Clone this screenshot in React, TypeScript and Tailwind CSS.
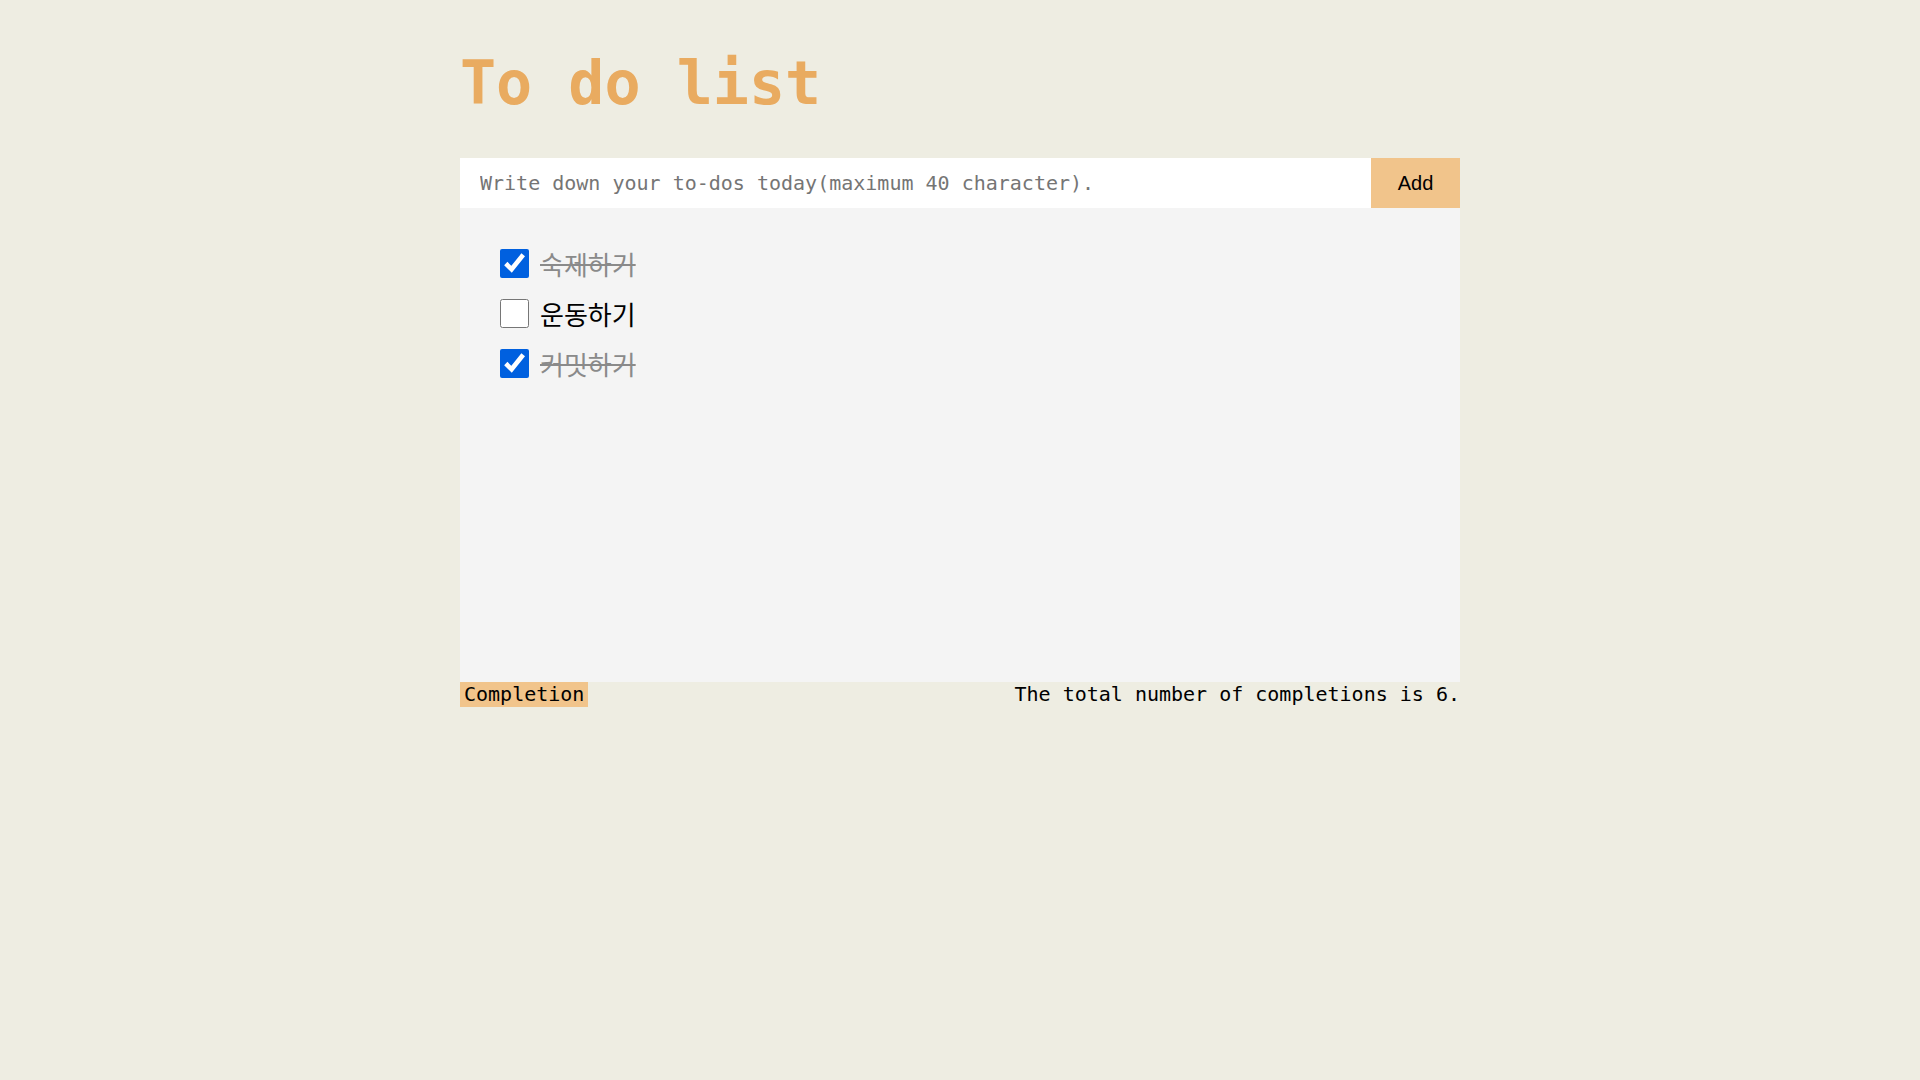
import { useState } from "react";

type Todo = { id: number; text: string; done: boolean };

const initial: Todo[] = [
	{ id: 1, text: "숙제하기", done: true },
	{ id: 2, text: "운동하기", done: false },
	{ id: 3, text: "커밋하기", done: true },
];

export default function App() {
	const [todos, setTodos] = useState<Todo[]>(initial);
	const [value, setValue] = useState("");

	const toggle = (id: number) =>
		setTodos(todos.map((t) => (t.id === id ? { ...t, done: !t.done } : t)));

	const add = () => {
		if (!value.trim()) return;
		setTodos([...todos, { id: Date.now(), text: value.slice(0, 40), done: false }]);
		setValue("");
	};

	return (
		<div className="min-h-screen bg-[#eeede2] font-['DejaVu_Sans_Mono',monospace]">
			<div className="w-[1000px] mx-auto pt-[48px]">
				<h1 className="text-[60px] leading-[70px] font-bold text-[#e9ab60] mb-[40px]">
					To do list
				</h1>

				<div className="flex h-[50px]">
					<input
						className="flex-1 bg-white px-5 text-[20px] text-black placeholder:text-[#757575] outline-none"
						placeholder="Write down your to-dos today(maximum 40 character)."
						value={value}
						maxLength={40}
						onChange={(e) => setValue(e.target.value)}
					/>
					<button
						onClick={add}
						className="w-[89px] bg-[#f1c48b] text-[20px] text-black font-['Liberation_Sans',sans-serif]"
					>
						Add
					</button>
				</div>

				<div className="h-[474px] bg-[#f4f4f4] pt-[30px] pl-10">
					{todos.map((t) => (
						<label key={t.id} className="flex items-center h-[50px] w-fit cursor-pointer">
							<input
								type="checkbox"
								checked={t.done}
								onChange={() => toggle(t.id)}
								className="w-[29px] h-[29px] m-0 accent-[#0060df]"
							/>
							<span
								className={
									"ml-[11px] text-[26px] font-['Noto_Sans_CJK_KR',sans-serif] " +
									(t.done ? "line-through text-[#8a8a8a]" : "text-black")
								}
							>
								{t.text}
							</span>
						</label>
					))}
				</div>

				<div className="flex items-start justify-between text-[20px] text-black">
					<button className="bg-[#f1c48b] px-1 h-[25px] leading-[25px]">Completion</button>
					<p className="leading-[24px]">The total number of completions is 6.</p>
				</div>
			</div>
		</div>
	);
}
